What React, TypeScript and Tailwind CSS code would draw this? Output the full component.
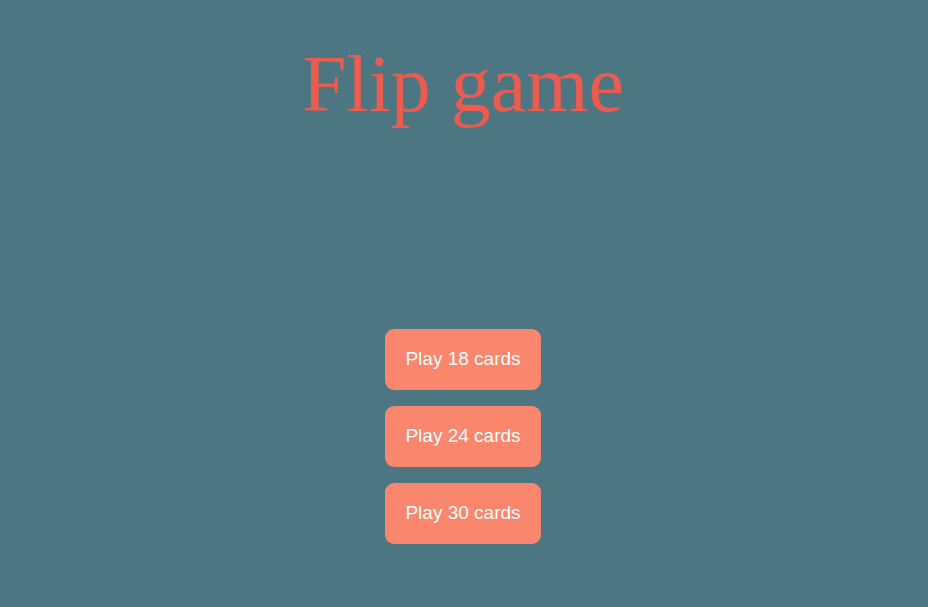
import React from 'react';

const options = [18, 24, 30];

export default function App() {
  return (
    <div className="min-h-[607px] w-full bg-[#4b7682] flex flex-col items-center">
      <h1 className="mt-[39px] text-[80px] leading-[normal] text-[#ea5b50] font-['Liberation_Serif',serif] -translate-x-[1px]">
        Flip game
      </h1>
      <div className="mt-[199px] flex flex-col items-center gap-4 -translate-x-[1px]">
        {options.map((n) => (
          <button
            key={n}
            className="w-[156px] h-[61px] rounded-[9px] bg-[#fa866d] text-white text-[19px] font-['Liberation_Sans',Arial,sans-serif]"
          >
            Play {n} cards
          </button>
        ))}
      </div>
    </div>
  );
}
